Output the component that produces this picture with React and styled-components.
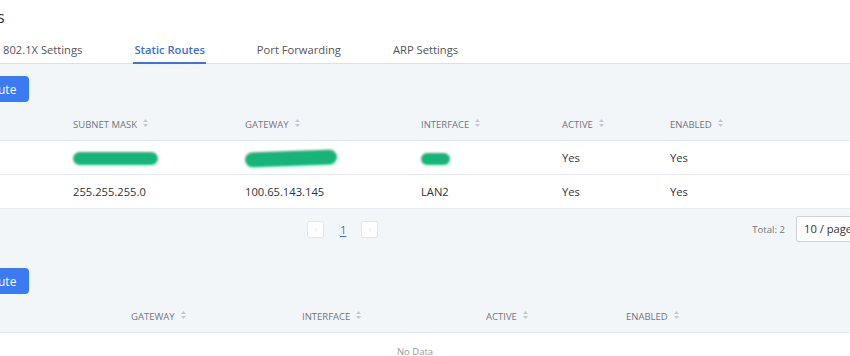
import styled, { createGlobalStyle } from "styled-components";

const GlobalStyle = createGlobalStyle`
  html, body {
    margin: 0;
    padding: 0;
    background: #fff;
    overflow: hidden;
  }
  body {
    font-family: "Open Sans", "Noto Sans", sans-serif;
    color: #333;
  }
`;

const Page = styled.div`
  width: 950px;
  margin-left: -60px;
`;

const Title = styled.h2`
  margin: 0;
  padding: 6px 13px 0;
  font-size: 16px;
  font-weight: 400;
  line-height: 22px;
  color: #333;
`;

const TabBar = styled.div`
  display: flex;
  margin-top: 8px;
  padding-left: 37px;
  border-bottom: 1px solid #dcdfe4;
`;

const Tab = styled.div`
  position: relative;
  padding: 0 26px;
  height: 27px;
  line-height: 27px;
  font-size: 11.2px;
  white-space: nowrap;
  font-weight: ${(p) => (p.$active ? 600 : 400)};
  color: ${(p) => (p.$active ? "#3d6fd8" : "#555")};
  &::after {
    content: "";
    display: ${(p) => (p.$active ? "block" : "none")};
    position: absolute;
    left: 25px;
    right: 25px;
    bottom: -1px;
    height: 2px;
    background: #3b74e2;
  }
`;

const Content = styled.div`
  background: #f3f6f9;
  padding: 12px 13px 0;
`;

const Section = styled.div`
  & + & {
    margin-top: 26px;
  }
`;

const PrimaryButton = styled.button`
  display: block;
  height: 26px;
  padding: 0 13px;
  margin: 0 0 6px -8px;
  border: none;
  border-radius: 4px;
  background: #3a7bf2;
  color: #fff;
  font-family: inherit;
  font-size: 12px;
`;

const Table = styled.table`
  width: 100%;
  border-collapse: collapse;
  table-layout: fixed;
`;

const HeadCell = styled.th`
  height: 32px;
  padding: 0 16px;
  text-align: left;
  font-size: 9.5px;
  font-weight: 400;
  color: #707780;
  white-space: nowrap;
  border-bottom: 1px solid #e3e7ec;
`;

const Row = styled.tr`
  background: #fff;
`;

const Cell = styled.td`
  height: 33px;
  padding: 0 16px;
  font-size: 11.2px;
  color: #333;
  white-space: nowrap;
  border-bottom: 1px solid #e6e9ed;
`;

const EmptyCell = styled.td`
  height: 34px;
  padding-top: 12px;
  vertical-align: top;
  text-align: center;
  font-size: 9.5px;
  color: #999;
`;

const Redacted = styled.span`
  display: inline-block;
  vertical-align: middle;
  width: ${(p) => p.$w}px;
  height: ${(p) => p.$h}px;
  margin-top: ${(p) => p.$dy || 0}px;
  border-radius: 10px;
  background: #17b47a;
  filter: blur(0.8px);
  transform: rotate(${(p) => p.$rot || 0}deg);
`;

const SortWrap = styled.span`
  display: inline-block;
  vertical-align: middle;
  margin-left: 6px;
  margin-top: -2px;
`;

const SortIcon = () => (
  <SortWrap>
    <svg width="5" height="8" viewBox="0 0 5 8">
      <path d="M2.5 0 L5 3 L0 3 Z" fill="#c4c8ce" />
      <path d="M0 5 L5 5 L2.5 8 Z" fill="#c4c8ce" />
    </svg>
  </SortWrap>
);

const PagerRow = styled.div`
  display: flex;
  align-items: center;
  height: 26px;
  margin-top: 7px;
`;

const Pager = styled.div`
  display: flex;
  align-items: center;
  margin-left: 354px;
`;

const PageArrow = styled.span`
  display: inline-flex;
  align-items: center;
  justify-content: center;
  width: 15px;
  height: 15px;
  border: 1px solid #e4e6ea;
  border-radius: 2px;
  background: #fff;
  color: #d5d8dc;
  font-size: 7px;
`;

const PageNum = styled.span`
  margin: 0 15px 0 16px;
  font-size: 11.2px;
  color: #3d6fd8;
  text-decoration: underline;
  text-underline-offset: 2px;
`;

const Total = styled.span`
  margin-left: auto;
  margin-right: 11px;
  font-size: 9.6px;
  color: #777;
`;

const Select = styled.div`
  width: 72px;
  height: 24px;
  box-sizing: content-box;
  padding-left: 7px;
  line-height: 24px;
  border: 1px solid #cfd3d8;
  border-radius: 2px;
  background: #fff;
  font-size: 11.2px;
  white-space: nowrap;
  color: #333;
`;

const firstCols = [104, 172, 176, 141, 108, null];
const secondCols = [162, 171, 184, 140, null];

const Cols = ({ widths }) => (
  <colgroup>
    {widths.map((w, i) => (
      <col key={i} style={w ? { width: w } : undefined} />
    ))}
  </colgroup>
);

const routes = [
  { mask: null, gateway: null, iface: null, active: "Yes", enabled: "Yes" },
  { mask: "255.255.255.0", gateway: "100.65.143.145", iface: "LAN2", active: "Yes", enabled: "Yes" },
];

export default function App() {
  return (
    <>
      <GlobalStyle />
      <Page>
        <Title>Routes</Title>
        <TabBar>
          <Tab>802.1X Settings</Tab>
          <Tab $active>Static Routes</Tab>
          <Tab>Port Forwarding</Tab>
          <Tab>ARP Settings</Tab>
        </TabBar>
        <Content>
          <Section>
            <PrimaryButton>Add Route</PrimaryButton>
            <Table>
              <Cols widths={firstCols} />
              <thead>
                <tr>
                  <HeadCell />
                  <HeadCell>SUBNET MASK<SortIcon /></HeadCell>
                  <HeadCell>GATEWAY<SortIcon /></HeadCell>
                  <HeadCell>INTERFACE<SortIcon /></HeadCell>
                  <HeadCell>ACTIVE<SortIcon /></HeadCell>
                  <HeadCell>ENABLED<SortIcon /></HeadCell>
                </tr>
              </thead>
              <tbody>
                {routes.map((r, i) => (
                  <Row key={i}>
                    <Cell />
                    <Cell>{r.mask ?? <Redacted $w={85} $h={13} />}</Cell>
                    <Cell>
                      {r.gateway ?? <Redacted $w={92} $h={15} $dy={2} $rot={-2} />}
                    </Cell>
                    <Cell>{r.iface ?? <Redacted $w={29} $h={12} />}</Cell>
                    <Cell>{r.active}</Cell>
                    <Cell>{r.enabled}</Cell>
                  </Row>
                ))}
              </tbody>
            </Table>
            <PagerRow>
              <Pager>
                <PageArrow>‹</PageArrow>
                <PageNum>1</PageNum>
                <PageArrow>›</PageArrow>
              </Pager>
              <Total>Total: 2</Total>
              <Select>10 / page</Select>
            </PagerRow>
          </Section>
          <Section>
            <PrimaryButton>Add Route</PrimaryButton>
            <Table>
              <Cols widths={secondCols} />
              <thead>
                <tr>
                  <HeadCell />
                  <HeadCell>GATEWAY<SortIcon /></HeadCell>
                  <HeadCell>INTERFACE<SortIcon /></HeadCell>
                  <HeadCell>ACTIVE<SortIcon /></HeadCell>
                  <HeadCell>ENABLED<SortIcon /></HeadCell>
                </tr>
              </thead>
              <tbody>
                <Row>
                  <EmptyCell colSpan={5}>No Data</EmptyCell>
                </Row>
              </tbody>
            </Table>
          </Section>
        </Content>
      </Page>
    </>
  );
}
